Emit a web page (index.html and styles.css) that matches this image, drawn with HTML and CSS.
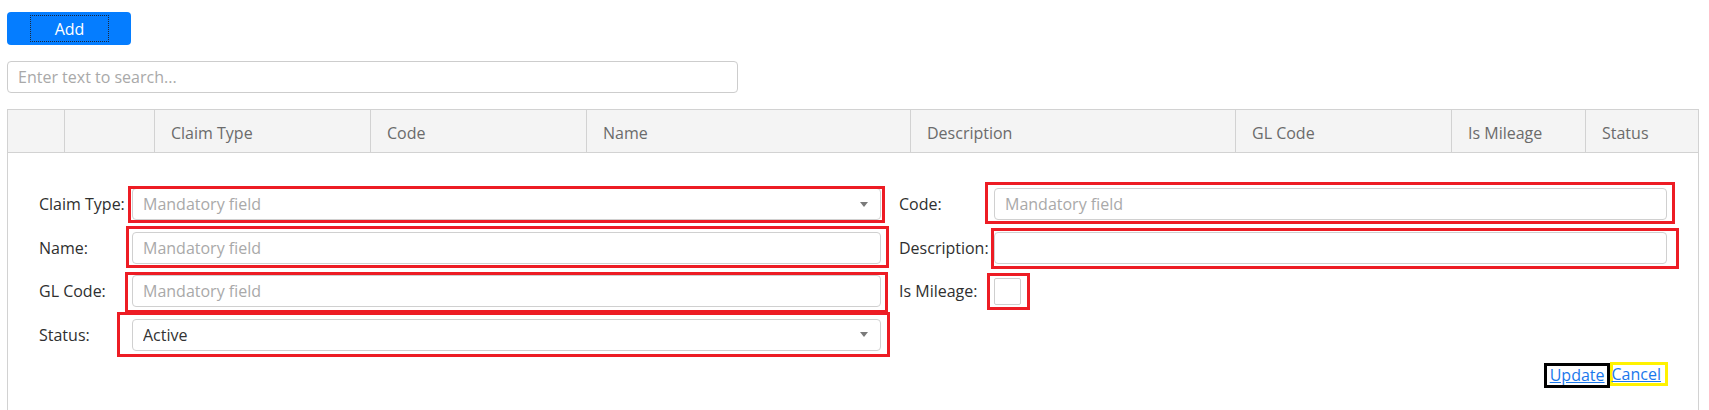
FILE: index.html
```html
<!DOCTYPE html>
<html lang="en">
<head>
<meta charset="utf-8">
<title>Claim Types</title>
<link rel="stylesheet" href="styles.css">
</head>
<body>
<div class="page">
  <button class="btn-add" type="button"><span class="focus">Add</span></button>
  <input class="search" type="text" placeholder="Enter text to search...">

  <div class="grid">
    <div class="grid-head">
      <div class="hc"></div>
      <div class="hc"></div>
      <div class="hc">Claim Type</div>
      <div class="hc">Code</div>
      <div class="hc">Name</div>
      <div class="hc">Description</div>
      <div class="hc">GL Code</div>
      <div class="hc">Is Mileage</div>
      <div class="hc">Status</div>
    </div>

    <div class="edit-form">
      <div class="form-grid">
        <label class="lbl">Claim Type:</label>
        <div class="field">
          <div class="editor"><input type="text" placeholder="Mandatory field"><span class="dd"></span></div>
          <span class="mark mk-claim"></span>
        </div>
        <label class="lbl lbl-r">Code:</label>
        <div class="field">
          <div class="editor"><input type="text" placeholder="Mandatory field"></div>
          <span class="mark mk-code"></span>
        </div>

        <label class="lbl">Name:</label>
        <div class="field">
          <div class="editor"><input type="text" placeholder="Mandatory field"></div>
          <span class="mark mk-name"></span>
        </div>
        <label class="lbl lbl-r">Description:</label>
        <div class="field">
          <div class="editor"><input type="text"></div>
          <span class="mark mk-desc"></span>
        </div>

        <label class="lbl">GL Code:</label>
        <div class="field">
          <div class="editor"><input type="text" placeholder="Mandatory field"></div>
          <span class="mark mk-gl"></span>
        </div>
        <label class="lbl lbl-r">Is Mileage:</label>
        <div class="field field-check">
          <span class="check"></span>
          <span class="mark mk-check"></span>
        </div>

        <label class="lbl">Status:</label>
        <div class="field">
          <div class="editor"><input type="text" value="Active"><span class="dd"></span></div>
          <span class="mark mk-status"></span>
        </div>
        <span class="empty"></span>
        <span class="empty"></span>

        <div class="actions">
          <span class="act act-update"><a href="#">Update</a></span>
          <span class="act act-cancel"><a href="#">Cancel</a></span>
        </div>
      </div>
    </div>
  </div>
</div>
</body>
</html>
```

FILE: styles.css
```css
* { box-sizing: border-box; }

html, body {
  margin: 0;
  overflow: hidden;
  background: #fff;
}

body {
  font-family: "Open Sans", "Noto Sans", "Liberation Sans", sans-serif;
  font-size: 16px;
  color: #333;
}

.page {
  padding: 12px 10px 0 7px;
}

/* Add button */
.btn-add {
  display: flex;
  width: 124px;
  height: 33px;
  padding: 3px 22px 3px 23px;
  border: 0;
  border-radius: 4px;
  background: #057dff;
  color: #fff;
  font: inherit;
  font-size: 16px;
}

.btn-add .focus {
  flex: 1;
  display: flex;
  align-items: center;
  justify-content: center;
  border: 1px dotted #1c2838;
}

/* search box */
.search {
  display: block;
  margin-top: 16px;
  width: 731px;
  height: 32px;
  padding: 0 10px;
  border: 1px solid #cdcdcd;
  border-radius: 4px;
  font: inherit;
  color: #333;
  outline: none;
}

.search::placeholder { color: #a9a9a9; }

/* grid */
.grid {
  margin-top: 16px;
  width: 1692px;
  border: 1px solid #d2d2d2;
  border-bottom: 0;
}

.grid-head {
  display: grid;
  grid-template-columns: 56px 90px 216px 216px 324px 325px 216px 134px 113px;
  height: 43px;
  background: #f4f4f4;
  border-bottom: 1px solid #d2d2d2;
}

.hc {
  display: flex;
  align-items: center;
  padding: 3px 0 0 16px;
  color: #6b6b6b;
  white-space: nowrap;
}

.hc + .hc { border-left: 1px solid #d2d2d2; }

/* edit form */
.edit-form {
  padding: 35px 31px 40px 31px;
}

.form-grid {
  display: grid;
  grid-template-columns: 93px 749px 113px 673px;
  grid-template-rows: repeat(4, 32px) auto;
  row-gap: 11.67px;
}

.lbl {
  display: flex;
  align-items: center;
  color: #2f2f2f;
  white-space: nowrap;
}

.lbl-r { padding-left: 18px; }

.field { position: relative; }

.editor {
  display: flex;
  align-items: center;
  height: 100%;
  border: 1px solid #d0d0d0;
  border-radius: 4px;
  background: #fff;
}

.editor input {
  flex: 1;
  min-width: 0;
  height: 100%;
  padding: 0 10px;
  border: 0;
  outline: none;
  background: transparent;
  font: inherit;
  color: #333;
}

.editor input::placeholder { color: #a9a9a9; }

.dd {
  width: 0;
  height: 0;
  margin-right: 12px;
  border-left: 4.5px solid transparent;
  border-right: 4.5px solid transparent;
  border-top: 5px solid #7a7a7a;
}

.field-check {
  justify-self: start;
  align-self: center;
  display: flex;
}

.check {
  width: 27px;
  height: 27px;
  border: 1px solid #cfcfcf;
  border-radius: 2px;
  background: #fff;
}

/* annotation highlight boxes drawn over the fields */
.mark {
  position: absolute;
  border: 3px solid #ed1c24;
  pointer-events: none;
}

.mk-claim  { top: -2px; left: -4px;  right: -4px;  bottom: -3px; }
.mk-name   { top: -6px; left: -6px;  right: -8px;  bottom: -4px; }
.mk-gl     { top: -3px; left: -7px;  right: -7px;  bottom: -6px; }
.mk-status { top: -7px; left: -15px; right: -9px;  bottom: -6px; }
.mk-code   { top: -6px; left: -9px;  right: -8px;  bottom: -4px; }
.mk-desc   { top: -4px; left: -3px;  right: -12px; bottom: -5px; }
.mk-check  { top: -5px; left: -7px;  right: -9px;  bottom: -5px; }

/* update / cancel */
.actions {
  grid-column: 1 / -1;
  justify-self: end;
  display: flex;
  align-items: flex-start;
  margin-right: -1px;
}

.act {
  display: block;
  line-height: 19px;
}

.act a {
  color: #1a78ec;
  text-decoration: underline;
}

.act-update {
  border: 3px solid #000;
  padding: 0 2px 0 3px;
}

.act-cancel {
  margin-top: -1px;
  border: 3px solid #fff200;
  padding: 0 4px 0 0;
  line-height: 18px;
}

.act-cancel a { margin-left: -1px; }
```
